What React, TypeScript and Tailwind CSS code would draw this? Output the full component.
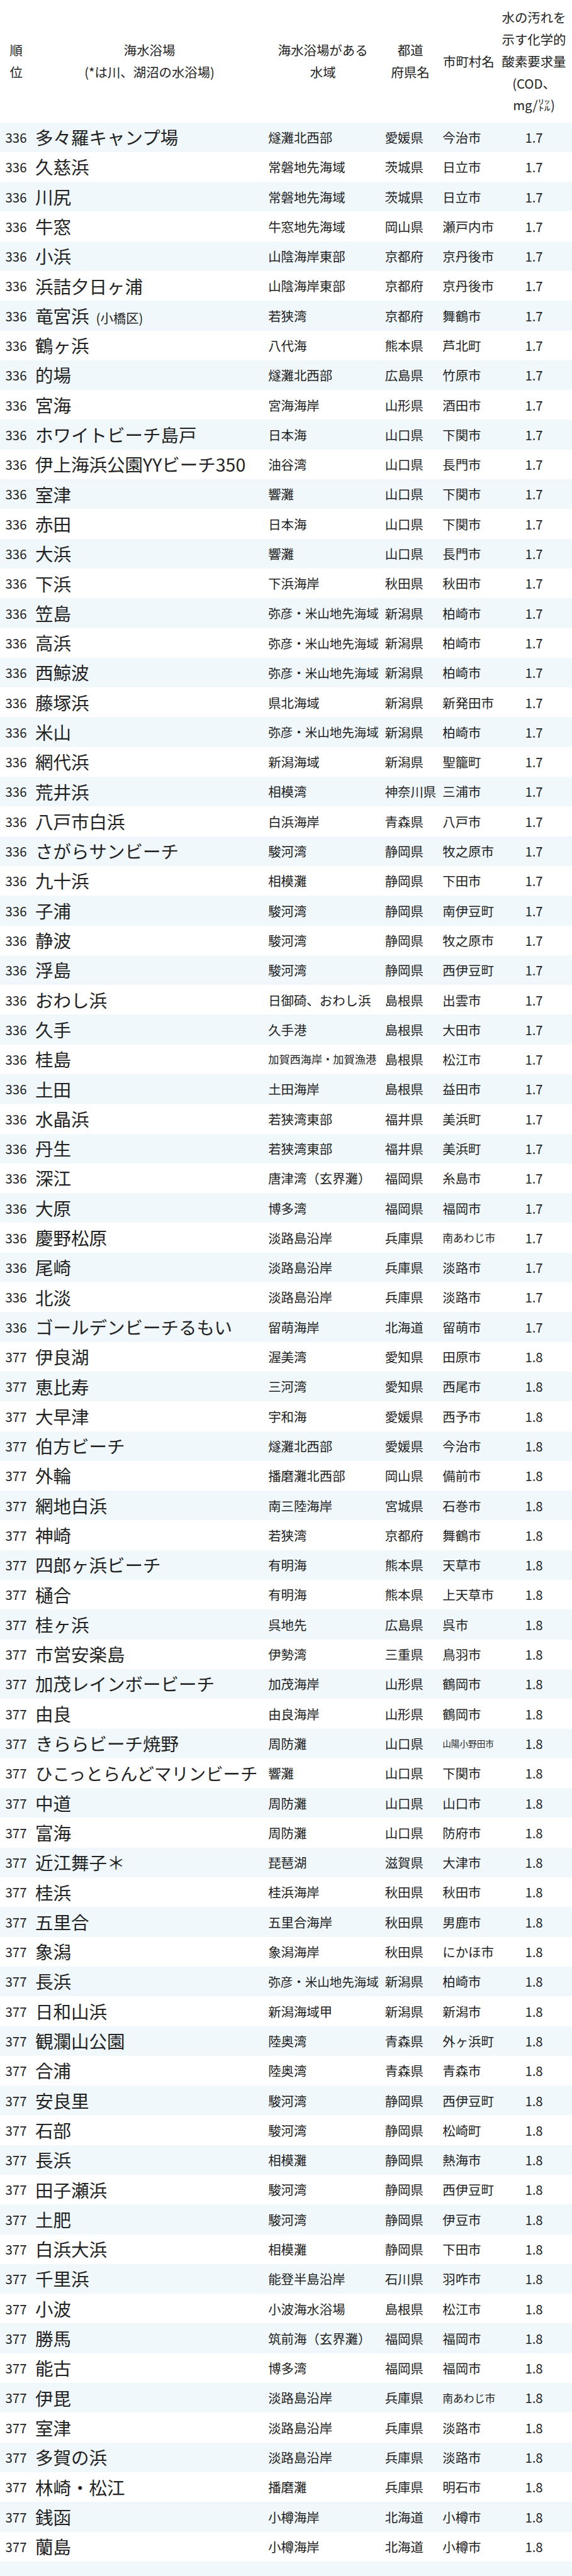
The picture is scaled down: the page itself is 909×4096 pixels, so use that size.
import React from "react";

type Row = [string, string, string, string, string, string];

const rows: Row[] = [
  ["336", "多々羅キャンプ場", "燧灘北西部", "愛媛県", "今治市", "1.7"],
  ["336", "久慈浜", "常磐地先海域", "茨城県", "日立市", "1.7"],
  ["336", "川尻", "常磐地先海域", "茨城県", "日立市", "1.7"],
  ["336", "牛窓", "牛窓地先海域", "岡山県", "瀬戸内市", "1.7"],
  ["336", "小浜", "山陰海岸東部", "京都府", "京丹後市", "1.7"],
  ["336", "浜詰夕日ヶ浦", "山陰海岸東部", "京都府", "京丹後市", "1.7"],
  ["336", "竜宮浜（小橋区）", "若狭湾", "京都府", "舞鶴市", "1.7"],
  ["336", "鶴ヶ浜", "八代海", "熊本県", "芦北町", "1.7"],
  ["336", "的場", "燧灘北西部", "広島県", "竹原市", "1.7"],
  ["336", "宮海", "宮海海岸", "山形県", "酒田市", "1.7"],
  ["336", "ホワイトビーチ島戸", "日本海", "山口県", "下関市", "1.7"],
  ["336", "伊上海浜公園YYビーチ350", "油谷湾", "山口県", "長門市", "1.7"],
  ["336", "室津", "響灘", "山口県", "下関市", "1.7"],
  ["336", "赤田", "日本海", "山口県", "下関市", "1.7"],
  ["336", "大浜", "響灘", "山口県", "長門市", "1.7"],
  ["336", "下浜", "下浜海岸", "秋田県", "秋田市", "1.7"],
  ["336", "笠島", "弥彦・米山地先海域", "新潟県", "柏崎市", "1.7"],
  ["336", "高浜", "弥彦・米山地先海域", "新潟県", "柏崎市", "1.7"],
  ["336", "西鯨波", "弥彦・米山地先海域", "新潟県", "柏崎市", "1.7"],
  ["336", "藤塚浜", "県北海域", "新潟県", "新発田市", "1.7"],
  ["336", "米山", "弥彦・米山地先海域", "新潟県", "柏崎市", "1.7"],
  ["336", "網代浜", "新潟海域", "新潟県", "聖籠町", "1.7"],
  ["336", "荒井浜", "相模湾", "神奈川県", "三浦市", "1.7"],
  ["336", "八戸市白浜", "白浜海岸", "青森県", "八戸市", "1.7"],
  ["336", "さがらサンビーチ", "駿河湾", "静岡県", "牧之原市", "1.7"],
  ["336", "九十浜", "相模灘", "静岡県", "下田市", "1.7"],
  ["336", "子浦", "駿河湾", "静岡県", "南伊豆町", "1.7"],
  ["336", "静波", "駿河湾", "静岡県", "牧之原市", "1.7"],
  ["336", "浮島", "駿河湾", "静岡県", "西伊豆町", "1.7"],
  ["336", "おわし浜", "日御碕、おわし浜", "島根県", "出雲市", "1.7"],
  ["336", "久手", "久手港", "島根県", "大田市", "1.7"],
  ["336", "桂島", "加賀西海岸・加賀漁港", "島根県", "松江市", "1.7"],
  ["336", "土田", "土田海岸", "島根県", "益田市", "1.7"],
  ["336", "水晶浜", "若狭湾東部", "福井県", "美浜町", "1.7"],
  ["336", "丹生", "若狭湾東部", "福井県", "美浜町", "1.7"],
  ["336", "深江", "唐津湾（玄界灘）", "福岡県", "糸島市", "1.7"],
  ["336", "大原", "博多湾", "福岡県", "福岡市", "1.7"],
  ["336", "慶野松原", "淡路島沿岸", "兵庫県", "南あわじ市", "1.7"],
  ["336", "尾崎", "淡路島沿岸", "兵庫県", "淡路市", "1.7"],
  ["336", "北淡", "淡路島沿岸", "兵庫県", "淡路市", "1.7"],
  ["336", "ゴールデンビーチるもい", "留萌海岸", "北海道", "留萌市", "1.7"],
  ["377", "伊良湖", "渥美湾", "愛知県", "田原市", "1.8"],
  ["377", "恵比寿", "三河湾", "愛知県", "西尾市", "1.8"],
  ["377", "大早津", "宇和海", "愛媛県", "西予市", "1.8"],
  ["377", "伯方ビーチ", "燧灘北西部", "愛媛県", "今治市", "1.8"],
  ["377", "外輪", "播磨灘北西部", "岡山県", "備前市", "1.8"],
  ["377", "網地白浜", "南三陸海岸", "宮城県", "石巻市", "1.8"],
  ["377", "神崎", "若狭湾", "京都府", "舞鶴市", "1.8"],
  ["377", "四郎ヶ浜ビーチ", "有明海", "熊本県", "天草市", "1.8"],
  ["377", "樋合", "有明海", "熊本県", "上天草市", "1.8"],
  ["377", "桂ヶ浜", "呉地先", "広島県", "呉市", "1.8"],
  ["377", "市営安楽島", "伊勢湾", "三重県", "鳥羽市", "1.8"],
  ["377", "加茂レインボービーチ", "加茂海岸", "山形県", "鶴岡市", "1.8"],
  ["377", "由良", "由良海岸", "山形県", "鶴岡市", "1.8"],
  ["377", "きららビーチ焼野", "周防灘", "山口県", "山陽小野田市", "1.8"],
  ["377", "ひこっとらんどマリンビーチ", "響灘", "山口県", "下関市", "1.8"],
  ["377", "中道", "周防灘", "山口県", "山口市", "1.8"],
  ["377", "富海", "周防灘", "山口県", "防府市", "1.8"],
  ["377", "近江舞子＊", "琵琶湖", "滋賀県", "大津市", "1.8"],
  ["377", "桂浜", "桂浜海岸", "秋田県", "秋田市", "1.8"],
  ["377", "五里合", "五里合海岸", "秋田県", "男鹿市", "1.8"],
  ["377", "象潟", "象潟海岸", "秋田県", "にかほ市", "1.8"],
  ["377", "長浜", "弥彦・米山地先海域", "新潟県", "柏崎市", "1.8"],
  ["377", "日和山浜", "新潟海域甲", "新潟県", "新潟市", "1.8"],
  ["377", "観瀾山公園", "陸奥湾", "青森県", "外ヶ浜町", "1.8"],
  ["377", "合浦", "陸奥湾", "青森県", "青森市", "1.8"],
  ["377", "安良里", "駿河湾", "静岡県", "西伊豆町", "1.8"],
  ["377", "石部", "駿河湾", "静岡県", "松崎町", "1.8"],
  ["377", "長浜", "相模灘", "静岡県", "熱海市", "1.8"],
  ["377", "田子瀬浜", "駿河湾", "静岡県", "西伊豆町", "1.8"],
  ["377", "土肥", "駿河湾", "静岡県", "伊豆市", "1.8"],
  ["377", "白浜大浜", "相模灘", "静岡県", "下田市", "1.8"],
  ["377", "千里浜", "能登半島沿岸", "石川県", "羽咋市", "1.8"],
  ["377", "小波", "小波海水浴場", "島根県", "松江市", "1.8"],
  ["377", "勝馬", "筑前海（玄界灘）", "福岡県", "福岡市", "1.8"],
  ["377", "能古", "博多湾", "福岡県", "福岡市", "1.8"],
  ["377", "伊毘", "淡路島沿岸", "兵庫県", "南あわじ市", "1.8"],
  ["377", "室津", "淡路島沿岸", "兵庫県", "淡路市", "1.8"],
  ["377", "多賀の浜", "淡路島沿岸", "兵庫県", "淡路市", "1.8"],
  ["377", "林崎・松江", "播磨灘", "兵庫県", "明石市", "1.8"],
  ["377", "銭函", "小樽海岸", "北海道", "小樽市", "1.8"],
  ["377", "蘭島", "小樽海岸", "北海道", "小樽市", "1.8"],
];

// entries the original squeezes into a smaller size so they fit their column
const nameSize: Record<string, string> = {
  "ひこっとらんどマリンビーチ": "text-[27.4px]",
};
const waterSize: Record<string, string> = {
  "弥彦・米山地先海域": "text-[19.5px]",
  "加賀西海岸・加賀漁港": "text-[17.2px]",
};
const citySize: Record<string, string> = {
  "山陽小野田市": "text-[13.6px]",
  "南あわじ市": "text-[16.8px]",
};

const Name = ({ name }: { name: string }) => {
  if (name === "竜宮浜（小橋区）") {
    return (
      <>
        竜宮浜<span className="ml-[11px] text-[20.4px]">(小橋区)</span>
      </>
    );
  }
  return <>{name}</>;
};

const Header = () => (
  <tr className="h-[194.5px] bg-white text-[20.4px] leading-[34.8px]">
    <td className="text-center">
      順<br />位
    </td>
    <td className="text-center">
      海水浴場<br />(*は川、湖沼の水浴場)
    </td>
    <td className="text-center">
      海水浴場がある<br />水域
    </td>
    <td className="text-center">
      都道<br />府県名
    </td>
    <td className="text-center whitespace-nowrap">市町村名</td>
    <td className="text-center">
      水の汚れを<br />示す化学的<br />酸素要求量<br />(COD、<br />mg/㍑)
    </td>
  </tr>
);

export default function App() {
  return (
    <div className="w-[909px] bg-white text-[#222] font-['Noto_Sans_CJK_JP','Noto_Sans',sans-serif]">
      <table className="w-[909px] table-fixed border-collapse">
        <colgroup>
          <col className="w-[51.5px]" />
          <col className="w-[372.2px]" />
          <col className="w-[179px]" />
          <col className="w-[99px]" />
          <col className="w-[86.4px]" />
          <col className="w-[120.9px]" />
        </colgroup>
        <tbody>
          <Header />
          {rows.map(([rank, name, water, pref, city, cod], i) => (
            <tr
              key={i}
              className={`h-[47.3px] leading-[1.2] whitespace-nowrap ${
                i % 2 === 0 ? "bg-[#f0f8fc]" : "bg-white"
              }`}
            >
              <td className="pl-[8.5px] text-[20.4px]">{rank}</td>
              <td className={`pl-[4.5px] ${nameSize[name] ?? "text-[28.5px]"}`}>
                <Name name={name} />
              </td>
              <td className={`pl-[2.5px] ${waterSize[water] ?? "text-[20.4px]"}`}>
                {water}
              </td>
              <td className="pl-[9px] text-[20.4px]">{pref}</td>
              <td className={`pl-[1.6px] ${citySize[city] ?? "text-[20.4px]"}`}>
                {city}
              </td>
              <td className="text-center text-[20.4px]">{cod}</td>
            </tr>
          ))}
          <tr className="h-[47.3px] bg-[#f0f8fc]">
            <td colSpan={6}></td>
          </tr>
        </tbody>
      </table>
    </div>
  );
}
